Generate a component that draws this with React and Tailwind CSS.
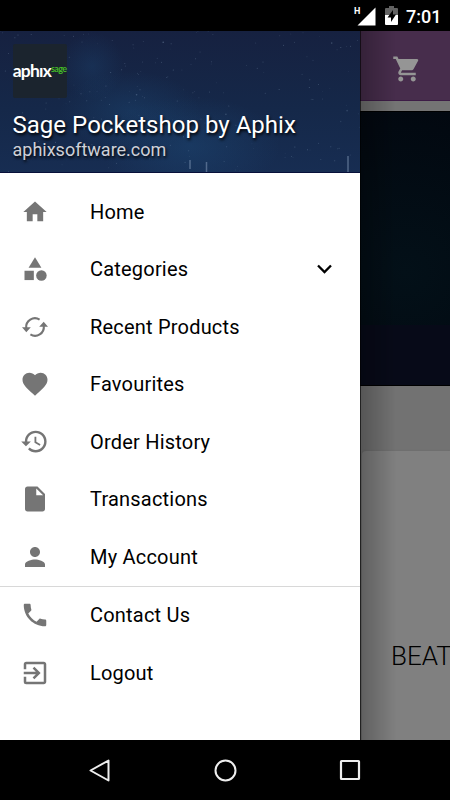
import React from "react";
import {
  MdHome, MdCategory, MdFavorite, MdHistory, MdInsertDriveFile,
  MdPerson, MdPhone, MdExitToApp, MdShoppingCart,
} from "react-icons/md";

function SyncIcon() {
  return (
    <svg width="30" height="30" viewBox="0 0 30 30" fill="none">
      <path d="M6.2 16A8.8 8.8 0 0 1 19.6 7.6M23.8 14A8.8 8.8 0 0 1 10.4 22.4" stroke="currentColor" strokeWidth="2.1" />
      <path d="M2 15.3h8.8L6.3 20.2zM19.2 14.7H28L23.7 9.8z" fill="currentColor" />
    </svg>
  );
}

const stars = Array.from({ length: 210 }, (_, i) => ({
  x: (i * 137.51 + ((i * i) % 29) * 7) % 360,
  y: (i * 61.83 + ((i * i) % 17) * 5) % 142,
  o: 0.08 + ((i * 7) % 11) * 0.022,
  r: i % 23 === 0 ? 0.8 : 0.5,
}));

function NightSky() {
  return (
    <svg className="absolute inset-0" width="360" height="142" viewBox="0 0 360 142">
      <defs>
        <linearGradient id="sky" x1="0" y1="0" x2="0" y2="1">
          <stop offset="0" stopColor="#162140" />
          <stop offset="0.55" stopColor="#152849" />
          <stop offset="1" stopColor="#172d52" />
        </linearGradient>
        <radialGradient id="haze">
          <stop offset="0" stopColor="#1d4a78" stopOpacity="0.75" />
          <stop offset="1" stopColor="#1d4a78" stopOpacity="0" />
        </radialGradient>
      </defs>
      <rect width="360" height="142" fill="url(#sky)" />
      <ellipse cx="92" cy="35" rx="32" ry="34" fill="url(#haze)" opacity="0.4" />
      <ellipse cx="130" cy="80" rx="70" ry="40" fill="url(#haze)" opacity="0.5" />
      <ellipse cx="190" cy="115" rx="90" ry="50" fill="url(#haze)" opacity="0.6" />
      {stars.map((s, i) => (
        <circle key={i} cx={s.x} cy={s.y} r={s.r} fill="#b9d3ee" opacity={s.o} />
      ))}
      <path d="M190 129v9M206.500 131v11M348 125v16" stroke="#8196b5" strokeWidth="1.5" opacity="0.55" />
      <rect y="141" width="360" height="1" fill="#08103a" />
    </svg>
  );
}

function Item({ icon, label, children }) {
  return (
    <div className="flex h-[57.5px] items-center pl-5">
      <span className="flex w-[30px] shrink-0 items-center justify-center text-[#757575]">{icon}</span>
      <span className="ml-10 whitespace-nowrap text-[20px] leading-6 tracking-[0.2px] text-black">{label}</span>
      {children}
    </div>
  );
}

function StatusBar() {
  return (
    <header className="flex h-[31px] shrink-0 items-center justify-end bg-black pr-[10px] text-white">
      <span className="mb-[9px] mr-[1px] w-[6px] text-[9px] font-bold leading-none">H</span>
      <svg className="-ml-[4px] mt-[1px]" width="19" height="19" viewBox="0 0 19 19"><path d="M18.500 0.500V18.500H0.500z" fill="#fff" /></svg>
      <svg className="ml-[9px]" width="13" height="19" viewBox="0 0 13 19">
        <path d="M1 2h3V0h5v2h3q1 0 1 1v7H0V3q0-1 1-1z" fill="#626262" />
        <path d="M0 9h13v9q0 1-1 1H1q-1 0-1-1z" fill="#fff" />
        <path d="M8 4L2.500 11.500H6V16L11 8.500H8z" fill="#000" />
      </svg>
      <span className="ml-[8px] mt-[2px] w-[34px] whitespace-nowrap text-[18px] font-medium leading-none">7:01</span>
    </header>
  );
}

function Drawer() {
  return (
    <aside className="flex w-[360px] shrink-0 flex-col bg-white">
      <div className="relative h-[142px] shrink-0 overflow-hidden">
        <NightSky />
        <div className="relative flex flex-col pl-[12.5px] pt-[13px]">
          <div className="flex h-[54px] w-[54px] items-center justify-center rounded-[2px] bg-[#1b242e]">
            <span className="text-[17.5px] font-bold leading-none tracking-[-0.8px] text-white" style={{ fontFamily: "Lato, sans-serif" }}>aphıx</span>
            <span className="mb-[6px] text-[9px] font-bold leading-none tracking-[-0.7px] text-[#43b927]" style={{ fontFamily: "Lato, sans-serif" }}>sage</span>
          </div>
          <div className="mt-[13px] whitespace-nowrap text-[24px] leading-[28px] tracking-[0.03px] text-white [text-shadow:1px_2px_3px_#000]">Sage Pocketshop by Aphix</div>
          <div className="text-[18px] leading-[22px] text-[#ced0d8] [text-shadow:1px_2px_3px_#000]">aphixsoftware.com</div>
        </div>
      </div>
      <nav className="pt-[10px]">
        <Item icon={<MdHome size={28} />} label="Home" />
        <Item icon={<MdCategory size={28} />} label="Categories">
          <svg className="ml-auto mr-[28px]" width="15" height="10" viewBox="0 0 15 10"><path d="M1 1.500L7.500 8L14 1.500" stroke="#000" strokeWidth="2.300" fill="none" /></svg>
        </Item>
        <Item icon={<SyncIcon />} label="Recent Products" />
        <Item icon={<MdFavorite size={30} />} label="Favourites" />
        <Item icon={<MdHistory className="-translate-x-px" size={29} />} label="Order History" />
        <Item icon={<MdInsertDriveFile size={30} />} label="Transactions" />
        <Item icon={<MdPerson size={30} />} label="My Account" />
        <div className="h-px bg-[#d8d8d8]" />
        <Item icon={<MdPhone size={30} />} label="Contact Us" />
        <Item icon={<MdExitToApp size={30} />} label="Logout" />
      </nav>
    </aside>
  );
}

function DimmedPage() {
  return (
    <main className="relative flex w-[90px] flex-col overflow-hidden bg-[#727272]">
      <div className="flex h-[70px] shrink-0 items-center border-b border-[#3d1c46] bg-[#472d4c] pl-[32px] pt-[7px] text-[#959595]">
        <MdShoppingCart size={30} />
      </div>
      <div className="h-[10px] shrink-0 bg-[#747474]" />
      <div className="h-[214px] shrink-0 border-t border-black bg-[radial-gradient(circle_at_46px_160px,#031018,#020810)]" />
      <div className="h-[61px] shrink-0 border-b border-black bg-[#070a18]" />
      <div className="ml-[2px] mt-[65px] flex-1 rounded-tl-[4px] bg-[#808080] shadow-[0_0_2px_#666]">
        <p className="whitespace-nowrap pl-[29px] pt-[190px] text-[26px] font-light leading-[30px] text-black">BEAT</p>
      </div>
      <div className="absolute inset-y-0 left-0 w-[36px] border-l border-black/70 bg-linear-to-r from-black/25 to-transparent" />
    </main>
  );
}

function NavigationBar() {
  return (
    <footer className="flex h-[60px] shrink-0 items-center justify-between bg-black pl-[88px] pr-[89px]">
      <svg width="23" height="25" viewBox="0 0 23 25"><path d="M2.500 12.500L20.500 2.500V22.500z" stroke="#eee" strokeWidth="2" strokeLinejoin="round" fill="none" /></svg>
      <svg width="23" height="23" viewBox="0 0 23 23"><circle cx="11.500" cy="11.500" r="10" stroke="#eee" strokeWidth="2" fill="none" /></svg>
      <svg width="22" height="22" viewBox="0 0 22 22"><rect x="2" y="2" width="18" height="18" rx="0.500" stroke="#eee" strokeWidth="2.200" fill="none" /></svg>
    </footer>
  );
}

export default function App() {
  return (
    <div className="flex h-[800px] w-[450px] flex-col overflow-hidden bg-black" style={{ fontFamily: "Roboto, sans-serif" }}>
      <StatusBar />
      <div className="flex h-[709px] shrink-0">
        <Drawer />
        <DimmedPage />
      </div>
      <NavigationBar />
    </div>
  );
}
